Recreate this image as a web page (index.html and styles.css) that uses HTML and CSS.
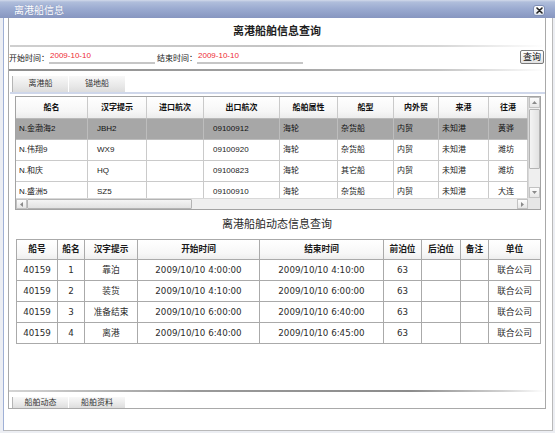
FILE: index.html
```html
<!DOCTYPE html>
<html lang="zh-CN">
<head>
<meta charset="utf-8">
<title>离港船信息</title>
<link rel="stylesheet" href="styles.css">
</head>
<body>
<div class="window">
  <div class="titlebar">
    <span class="title-text">离港船信息</span>
    <span class="close"><svg width="7" height="7" viewBox="0 0 7 7"><path d="M1 1L6 6M6 1L1 6" stroke="#222" stroke-width="1.6" stroke-linecap="round"/></svg></span>
  </div>
  <div class="frame">
    <div class="panel">
      <div class="head-title">离港船舶信息查询</div>
      <div class="sep sep-light"></div>
      <div class="query-row">
        <span class="label">开始时间：</span>
        <span class="date-input">2009-10-10</span>
        <span class="label">结束时间：</span>
        <span class="date-input">2009-10-10</span>
        <span class="btn">查询</span>
      </div>
      <div class="sep sep-dark"></div>
      <div class="tabs">
        <span class="tab tab-first">离港船</span>
        <span class="tab">锚地船</span>
      </div>
      <div class="tab-line"></div>

      <div class="grid1">
        <div class="g1-body">
          <div class="g1-row g1-head">
            <span>船名</span><span>汉字提示</span><span>进口航次</span><span>出口航次</span><span>船舶属性</span><span>船型</span><span>内外贸</span><span>来港</span><span>往港</span>
          </div>
          <div class="g1-row selected">
            <span>N.金渤海2</span><span class="pad">JBH2</span><span></span><span class="pad">09100912</span><span>海轮</span><span>杂货船</span><span>内贸</span><span>未知港</span><span class="pad">黄骅</span>
          </div>
          <div class="g1-row">
            <span>N.伟翔9</span><span class="pad">WX9</span><span></span><span class="pad">09100920</span><span>海轮</span><span>杂货船</span><span>内贸</span><span>未知港</span><span class="pad">潍坊</span>
          </div>
          <div class="g1-row">
            <span>N.和庆</span><span class="pad">HQ</span><span></span><span class="pad">09100823</span><span>海轮</span><span>其它船</span><span>内贸</span><span>未知港</span><span class="pad">潍坊</span>
          </div>
          <div class="g1-row">
            <span>N.盛洲5</span><span class="pad">SZ5</span><span></span><span class="pad">09100910</span><span>海轮</span><span>杂货船</span><span>内贸</span><span>未知港</span><span class="pad">大连</span>
          </div>
        </div>
        <div class="vscroll">
          <span class="sb-btn sb-up"><svg width="5" height="3" viewBox="0 0 5 3"><path d="M0 3L2.5 0L5 3Z" fill="#8a8a8a"/></svg></span>
          <span class="sb-thumb-v"></span>
          <span class="sb-fill"></span>
          <span class="sb-btn sb-down"><svg width="5" height="3" viewBox="0 0 5 3"><path d="M0 0L2.5 3L5 0Z" fill="#8a8a8a"/></svg></span>
        </div>
        <div class="hscroll">
          <span class="sb-btn sb-left"><svg width="3" height="5" viewBox="0 0 3 5"><path d="M3 0L0 2.5L3 5Z" fill="#8a8a8a"/></svg></span>
          <span class="sb-thumb-h"></span>
          <span class="sb-fill"></span>
          <span class="sb-btn sb-right"><svg width="3" height="5" viewBox="0 0 3 5"><path d="M0 0L3 2.5L0 5Z" fill="#8a8a8a"/></svg></span>
        </div>
        <div class="corner"></div>
      </div>

      <div class="sub-title">离港船舶动态信息查询</div>

      <div class="grid2">
        <div class="g2-row g2-head">
          <span>船号</span><span>船名</span><span>汉字提示</span><span>开始时间</span><span>结束时间</span><span>前泊位</span><span>后泊位</span><span>备注</span><span>单位</span>
        </div>
        <div class="g2-row">
          <span>40159</span><span>1</span><span>靠泊</span><span>2009/10/10 4:00:00</span><span>2009/10/10 4:10:00</span><span>63</span><span></span><span></span><span>联合公司</span>
        </div>
        <div class="g2-row">
          <span>40159</span><span>2</span><span>装货</span><span>2009/10/10 4:10:00</span><span>2009/10/10 6:00:00</span><span>63</span><span></span><span></span><span>联合公司</span>
        </div>
        <div class="g2-row">
          <span>40159</span><span>3</span><span>准备结束</span><span>2009/10/10 6:00:00</span><span>2009/10/10 6:40:00</span><span>63</span><span></span><span></span><span>联合公司</span>
        </div>
        <div class="g2-row">
          <span>40159</span><span>4</span><span>离港</span><span>2009/10/10 6:40:00</span><span>2009/10/10 6:45:00</span><span>63</span><span></span><span></span><span>联合公司</span>
        </div>
      </div>

      <div class="bottom-sep"></div>
      <div class="bottom-tabs">
        <span class="tab tab-first">船舶动态</span>
        <span class="tab">船舶资料</span>
      </div>
    </div>
  </div>
</div>
</body>
</html>
```
FILE: styles.css
```css
* { box-sizing: border-box; }
html, body { margin: 0; padding: 0; }
body {
  width: 555px;
  height: 433px;
  overflow: hidden;
  background: #eceef3;
  font-family: "Liberation Sans", "Noto Sans CJK SC", sans-serif;
  font-size: 8px;
  color: #222;
}
.window {
  width: 555px;
  height: 433px;
  display: flex;
  flex-direction: column;
}
.titlebar {
  height: 18px;
  flex: none;
  display: flex;
  align-items: center;
  justify-content: space-between;
  padding: 0 10px 0 14px;
  background: linear-gradient(#d2daea 0, #b0bedb 2px, #9aaad0 50%, #8796c0 100%);
}
.title-text {
  color: #fff;
  font-size: 10px;
  line-height: 12px;
  margin-top: 3px;
  text-shadow: 0 0 1px #7585b3;
}
.close {
  width: 12px;
  height: 11px;
  margin-top: 2px;
  display: flex;
  align-items: center;
  justify-content: center;
  border: 1px solid #7f8fb6;
  border-radius: 3px;
  background: linear-gradient(#ffffff, #dfe4ee);
}
.frame {
  flex: 1;
  display: flex;
  flex-direction: column;
  margin: 0 2px 2px 3px;
  padding: 0 6px 21px 4px;
  background: #fff;
  border-left: 1px solid #9fb0d6;
  border-right: 1px solid #b9b9b9;
  border-bottom: 1px solid #b9b9b9;
}
.panel {
  flex: 1;
  display: flex;
  flex-direction: column;
  border: 1px solid #a9a9a9;
  border-top: none;
  overflow: hidden;
}
.head-title {
  padding-top: 6px;
  height: 20px;
  line-height: 14px;
  text-align: center;
  font-size: 11px;
  font-weight: bold;
  color: #1e1e1e;
}
.sep { height: 2px; flex: none; }
.sep-light {
  margin-top: 7px;
  margin-left: 1px;
  background: linear-gradient(to right, #cfcfcf, #c4c4c4 50%, #d6d6d6 80%, #fff);
}
.sep-dark {
  margin-top: 5px;
  background: linear-gradient(to right, #8e8e8e, #a2a2a2 50%, #c4c4c4 80%, #fff);
}
.query-row {
  margin-top: 3px;
  height: 14px;
  display: flex;
  align-items: center;
}
.label { font-size: 8px; color: #222; }
.date-input {
  width: 106px;
  height: 14px;
  margin-right: 2px;
  padding-left: 1px;
  line-height: 12px;
  color: #ee2b35;
  font-size: 8px;
  border-bottom: 2px solid #c6c6c6;
}
.btn {
  margin-left: auto;
  margin-right: 1px;
  width: 24px;
  height: 14px;
  line-height: 12px;
  text-align: center;
  font-size: 9px;
  color: #111;
  border: 1px solid #7a7a7a;
  border-radius: 2px;
  background: linear-gradient(#ffffff, #e2e2e2);
}
.tabs, .bottom-tabs {
  display: flex;
  gap: 1px;
  padding-left: 3px;
}
.tabs { margin-top: 5px; height: 16px; }
.tab {
  width: 56px;
  text-align: center;
  color: #333;
  font-size: 8px;
  background: linear-gradient(#f8f8f8, #e9e9e9 60%, #dddddd);
}
.tabs .tab { line-height: 16px; }
.tab-first { border-left: 1px solid #b5b5b5; }
.tab-line {
  height: 2px;
  margin-top: 0;
  margin-left: 1px;
  background: #cfd7ea;
}

/* ship grid */
.grid1 {
  margin-top: 2px;
  margin-left: 6px;
  width: 526px;
  height: 114px;
  flex: none;
  display: grid;
  grid-template-columns: 512px 12px;
  grid-template-rows: 101px 11px;
  border: 1px solid #a3a3a3;
}
.g1-body { overflow: hidden; }
.g1-row {
  display: grid;
  grid-template-columns: 72px 59px 57px 76px 58px 56px 45px 50px 39px;
  height: 21px;
}
.g1-row span {
  border-right: 1px solid #cacaca;
  border-bottom: 1px solid #cacaca;
  line-height: 20px;
  padding-left: 3px;
  white-space: nowrap;
  overflow: hidden;
  font-size: 8px;
  color: #1a1a1a;
}
.g1-row span.pad { padding-left: 9px; }
.g1-head { height: 22px; }
.g1-head span {
  line-height: 21px;
  padding-left: 0;
  text-align: center;
  font-weight: bold;
  color: #111;
  background: linear-gradient(#ffffff, #f6f6f6 70%, #ececec);
  border-bottom-color: #b9b9b9;
}
.g1-row.selected span {
  background: #a7a7a7;
  border-right-color: #bdbdbd;
  border-bottom-color: #bdbdbd;
  color: #111;
}
.vscroll, .hscroll {
  display: flex;
  background: #efefef;
}
.vscroll { flex-direction: column; border-left: 1px solid #d8d8d8; }
.hscroll { flex-direction: row; border-top: 1px solid #d8d8d8; }
.sb-btn {
  flex: none;
  display: flex;
  align-items: center;
  justify-content: center;
  border: 1px solid #c2c2c2;
  background: linear-gradient(#fdfdfd, #e6e6e6);
}
.sb-up, .sb-down { height: 11px; }
.sb-left, .sb-right { width: 11px; }
.sb-thumb-v {
  height: 60px;
  margin-top: 1px;
  flex: none;
  border: 1px solid #b4b4b4;
  border-radius: 1px;
  background: linear-gradient(to right, #f4f4f4, #e2e2e2);
}
.sb-thumb-h {
  width: 165px;
  flex: none;
  border: 1px solid #b4b4b4;
  border-radius: 1px;
  background: linear-gradient(#f4f4f4, #e2e2e2);
}
.sb-fill { flex: 1; }
.corner { background: #e6e6e6; }

.sub-title {
  margin-top: 7px;
  height: 14px;
  line-height: 14px;
  text-align: center;
  font-size: 11px;
  color: #2a2a2a;
}

/* movement grid */
.grid2 {
  margin-top: 8px;
  margin-left: 7px;
  width: 525px;
  flex: none;
  border-left: 1px solid #aaaaaa;
  border-top: 1px solid #aaaaaa;
  font-family: "DejaVu Sans", "Noto Sans CJK SC", sans-serif;
}
.g2-row {
  display: grid;
  grid-template-columns: 41px 27px 53px 122px 124px 38px 39px 28px 52px;
  height: 21px;
}
.g2-row span {
  border-right: 1px solid #aaaaaa;
  border-bottom: 1px solid #aaaaaa;
  line-height: 20px;
  text-align: center;
  white-space: nowrap;
  overflow: hidden;
  font-size: 8.7px;
  color: #2b2b2b;
}
.g2-head { height: 20px; }
.g2-head span {
  line-height: 19px;
  font-weight: bold;
  font-size: 8.7px;
  color: #1a1a1a;
  background: linear-gradient(#ffffff, #f7f7f7 70%, #eeeeee);
}

.bottom-sep {
  margin-top: auto;
  height: 2px;
  flex: none;
  background: linear-gradient(to right, #d4d4d4, #9a9a9a 35%, #8c8c8c 75%, #d0d0d0 92%, #fff);
}
.bottom-tabs {
  margin-top: 5px;
  height: 11px;
  flex: none;
  overflow: hidden;
}
.bottom-tabs .tab { line-height: 11px; height: 11px; }
```
